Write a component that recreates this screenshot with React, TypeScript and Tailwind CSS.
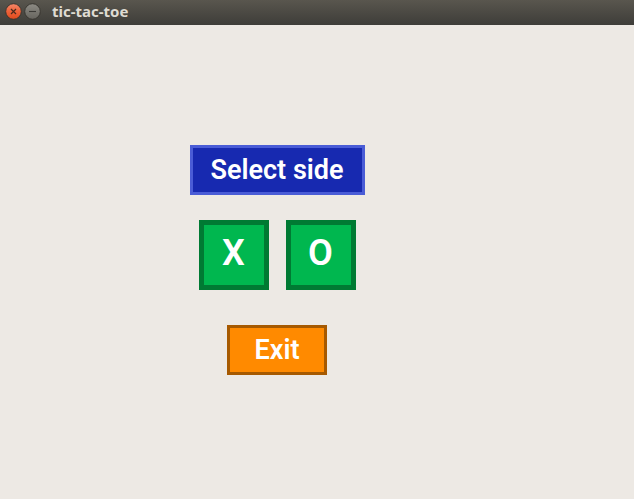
function TitleBar({ title }: { title: string }) {
  return (
    <header className="flex h-[25px] shrink-0 items-center bg-linear-to-b from-[#59564e] to-[#3e3d39] pb-[2px] pl-[5px]">
      <div className="flex gap-[2px]">
        <button type="button" aria-label="Close" className="size-[17px]">
          <svg viewBox="0 0 17 17" className="size-full">
            <defs>
              <linearGradient id="close-fill" x1="0" y1="0" x2="0" y2="1">
                <stop offset="0" stopColor="#f4886a" />
                <stop offset="0.5" stopColor="#ee6239" />
                <stop offset="1" stopColor="#df4a1c" />
              </linearGradient>
            </defs>
            <circle cx="8.5" cy="8.5" r="7.8" fill="url(#close-fill)" stroke="#35332e" strokeWidth="0.9" />
            <path d="M6 6l5 5M11 6l-5 5" stroke="#4b2a1c" strokeWidth="1.2" />
          </svg>
        </button>
        <button type="button" aria-label="Minimize" className="size-[17px]">
          <svg viewBox="0 0 17 17" className="size-full">
            <defs>
              <linearGradient id="minimize-fill" x1="0" y1="0" x2="0" y2="1">
                <stop offset="0" stopColor="#8d8b84" />
                <stop offset="1" stopColor="#66645e" />
              </linearGradient>
            </defs>
            <circle cx="8.5" cy="8.5" r="7.8" fill="url(#minimize-fill)" stroke="#35332e" strokeWidth="0.9" />
            <path d="M5 8.5h7" stroke="#3b3a36" strokeWidth="1.1" />
          </svg>
        </button>
      </div>
      <h1 className="pb-[2px] pl-[11px] font-['Noto_Sans',sans-serif] text-[15px] leading-5 font-bold text-[#dfdbd2]">{title}</h1>
    </header>
  );
}

function SideButton({ side }: { side: string }) {
  return (
    <button
      type="button"
      className="flex size-[70px] items-center justify-center border-5 border-[#007a33] bg-[#00b74f] pb-1 text-[36px] leading-10"
    >
      {side}
    </button>
  );
}

export default function App() {
  return (
    <div className="flex min-h-screen flex-col bg-[#ede9e4]">
      <TitleBar title="tic-tac-toe" />
      <main className="flex flex-1 flex-col items-center pt-[120px] pr-20 font-['Roboto',sans-serif] font-semibold text-white">
        <h2 className="flex h-[50px] w-[175px] items-center justify-center border-3 border-[#4a5cd6] bg-[#1729b0] text-[27px] leading-8">
          Select side
        </h2>
        <div className="mt-[25px] flex gap-[17px]">
          <SideButton side="X" />
          <SideButton side="O" />
        </div>
        <button
          type="button"
          className="mt-[35px] flex h-[50px] w-[100px] items-center justify-center border-3 border-[#a65900] bg-[#ff8a00] text-[27px] leading-8"
        >
          Exit
        </button>
      </main>
    </div>
  );
}
